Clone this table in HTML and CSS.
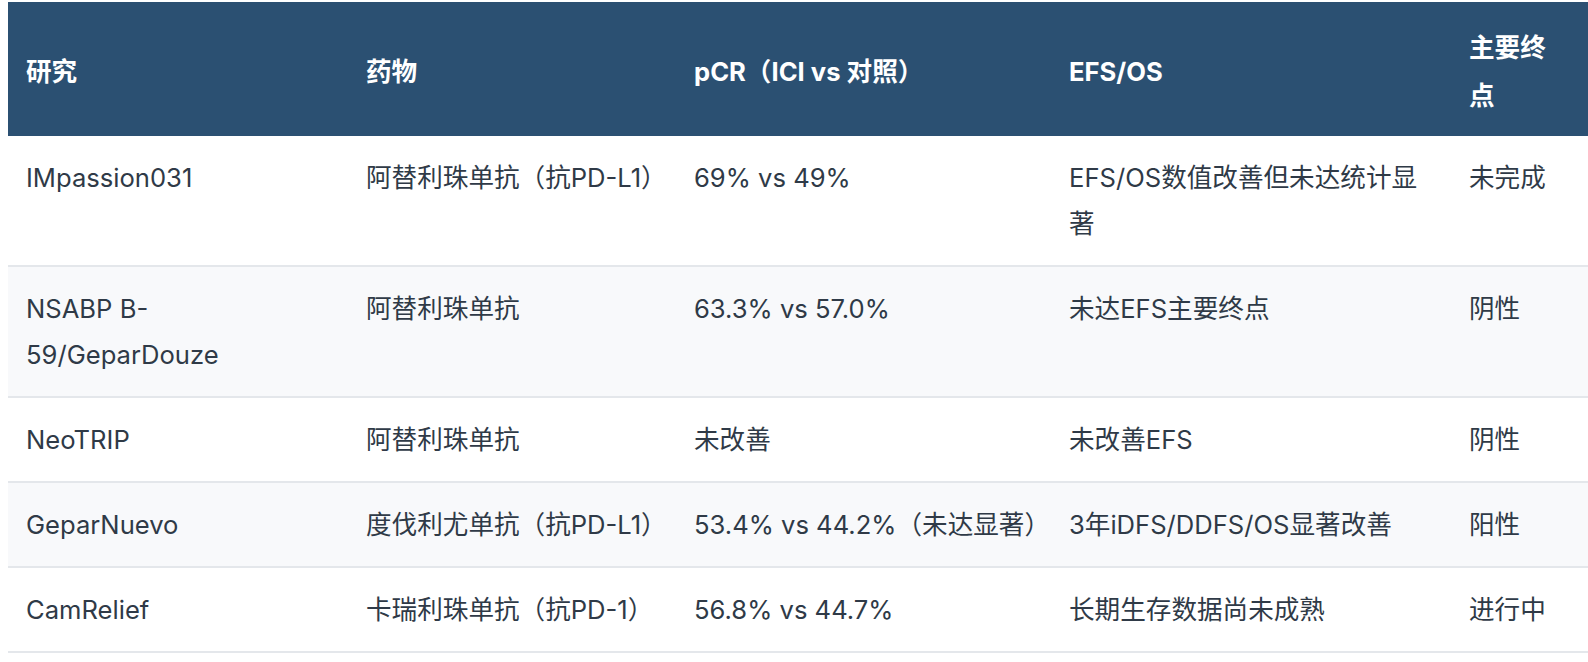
FILE: index.html
```html
<!DOCTYPE html>
<html lang="zh-CN">
<head>
<meta charset="utf-8">
<title>ICI 新辅助研究</title>
<link rel="stylesheet" href="styles.css">
</head>
<body>
<div class="wrap">
<table class="trials">
  <colgroup>
    <col class="c-study">
    <col class="c-drug">
    <col class="c-pcr">
    <col class="c-efs">
    <col class="c-end">
  </colgroup>
  <thead>
    <tr>
      <th>研究</th>
      <th>药物</th>
      <th class="pcr">pCR（ICI vs 对照）</th>
      <th class="efs">EFS/OS</th>
      <th>主要终点</th>
    </tr>
  </thead>
  <tbody>
    <tr>
      <td>IMpassion031</td>
      <td>阿替利珠单抗（抗PD-L1）</td>
      <td class="pcr">69% vs 49%</td>
      <td class="efs">EFS/OS数值改善但未达统计显著</td>
      <td>未完成</td>
    </tr>
    <tr>
      <td>NSABP B-59/GeparDouze</td>
      <td>阿替利珠单抗</td>
      <td class="pcr">63.3% vs 57.0%</td>
      <td class="efs">未达EFS主要终点</td>
      <td>阴性</td>
    </tr>
    <tr>
      <td>NeoTRIP</td>
      <td>阿替利珠单抗</td>
      <td class="pcr">未改善</td>
      <td class="efs">未改善EFS</td>
      <td>阴性</td>
    </tr>
    <tr>
      <td>GeparNuevo</td>
      <td>度伐利尤单抗（抗PD-L1）</td>
      <td class="pcr">53.4% vs 44.2%（未达显著）</td>
      <td class="efs">3年iDFS/DDFS/OS显著改善</td>
      <td>阳性</td>
    </tr>
    <tr>
      <td>CamRelief</td>
      <td>卡瑞利珠单抗（抗PD-1）</td>
      <td class="pcr">56.8% vs 44.7%</td>
      <td class="efs">长期生存数据尚未成熟</td>
      <td>进行中</td>
    </tr>
  </tbody>
</table>
</div>
</body>
</html>
```
FILE: styles.css
```css
html, body {
  margin: 0;
  padding: 0;
  background: #ffffff;
}
.wrap {
  padding: 2px 0 0 8px;
}
.trials {
  width: 1580px;
  table-layout: fixed;
  border-collapse: collapse;
  font-family: "Inter", "Noto Sans CJK SC", sans-serif;
  font-size: 25.6px;
  line-height: 46px;
  color: #2f3a47;
}
.c-study { width: 340px; }
.c-drug { width: 328px; }
.c-pcr { width: 381px; }
.c-efs { width: 394px; }
.c-end { width: 137px; }
.trials th {
  background: #2b5072;
  color: #ffffff;
  font-weight: 700;
  text-align: left;
  vertical-align: middle;
  line-height: 48px;
  padding: 22px 18px 16px;
}
.trials td {
  text-align: left;
  vertical-align: top;
  padding: 19px 18px 18px;
  border-bottom: 2px solid #e4e7eb;
}
.trials .pcr {
  padding-right: 0;
}
.trials .efs {
  padding-left: 12px;
}
.trials tbody tr:nth-child(even) td {
  background: #f8f9fb;
}
```
